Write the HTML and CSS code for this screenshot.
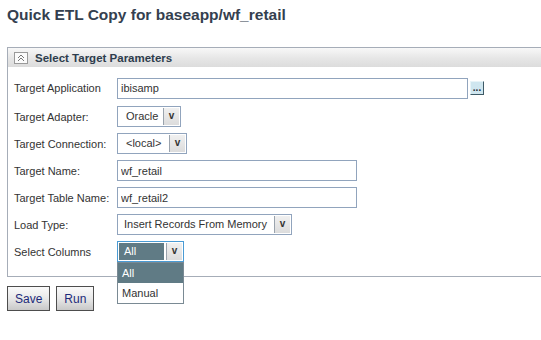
FILE: index.html
```html
<!DOCTYPE html>
<html lang="en">
<head>
  <meta charset="UTF-8">
  <title>Quick ETL Copy</title>
  <link rel="stylesheet" href="styles.css">
</head>
<body>
  <h1>Quick ETL Copy for baseapp/wf_retail</h1>

  <div class="panel">
    <div class="panel-head">
      <span class="collapse">
        <svg width="12" height="10" viewBox="0 0 12 10"><path d="M3 5 L6 2 L9 5 M3 8 L6 5 L9 8" fill="none" stroke="#777" stroke-width="1"/></svg>
      </span>
      <span class="panel-title">Select Target Parameters</span>
    </div>

    <div class="form">
      <label class="row-app">Target Application</label>
      <div class="row-app field">
        <input class="text wide" type="text" value="ibisamp">
        <span class="browse">...</span>
      </div>

      <label>Target Adapter:</label>
      <div class="field">
        <span class="select w-oracle"><span class="val">Oracle</span><span class="arrow">v</span></span>
      </div>

      <label>Target Connection:</label>
      <div class="field">
        <span class="select w-local"><span class="val">&lt;local&gt;</span><span class="arrow">v</span></span>
      </div>

      <label>Target Name:</label>
      <div class="field"><input class="text mid" type="text" value="wf_retail"></div>

      <label>Target Table Name:</label>
      <div class="field"><input class="text mid" type="text" value="wf_retail2"></div>

      <label>Load Type:</label>
      <div class="field">
        <span class="select w-load"><span class="val">Insert Records From Memory</span><span class="arrow">v</span></span>
      </div>

      <label>Select Columns</label>
      <div class="field">
        <span class="select w-cols open">
          <span class="val">All</span><span class="arrow">v</span>
          <ul class="options">
            <li class="on">All</li>
            <li>Manual</li>
          </ul>
        </span>
      </div>
    </div>
  </div>

  <div class="actions">
    <button>Save</button>
    <button>Run</button>
  </div>
</body>
</html>
```

FILE: styles.css
```css
html {
  overflow: hidden;
}
body {
  margin: 0;
  padding: 0 0 0 7px;
  font-family: "Liberation Sans", Arial, sans-serif;
  font-size: 11px;
  color: #333;
  background: #fff;
}
h1 {
  margin: 0;
  padding-top: 6px;
  height: 47px;
  box-sizing: border-box;
  font-size: 15.5px;
  font-weight: bold;
  color: #34404f;
}
.panel {
  width: 560px;
  border: 1px solid #a6adb8;
  border-right: none;
  height: 230px;
  box-sizing: border-box;
}
.panel-head {
  height: 19px;
  display: flex;
  align-items: center;
  background: linear-gradient(#f8f8f8, #e6e6e6 55%, #dcdcdc);
}
.collapse {
  width: 12px;
  height: 10px;
  margin-left: 6px;
  border: 1px solid #9a9a9a;
  background: #fbfbfb;
  display: flex;
}
.panel-title {
  margin-left: 7px;
  font-weight: bold;
  font-size: 11.5px;
  color: #2e3d4d;
}
.form {
  display: grid;
  grid-template-columns: 103px auto;
  grid-auto-rows: 21px;
  row-gap: 6px;
  padding: 12px 0 0 6px;
  align-items: center;
}
.form label.row-app,
.form .row-app {
  margin-bottom: 3px;
}
.field {
  display: flex;
  align-items: center;
  height: 21px;
}
.text {
  height: 21px;
  box-sizing: border-box;
  border: 1px solid #91a4bd;
  padding: 0 3px;
  font: inherit;
  color: #333;
  margin: 0;
}
.wide {
  width: 351px;
}
.mid {
  width: 240px;
}
.browse {
  width: 12px;
  height: 12px;
  margin-left: 2px;
  background: #cfe6ef;
  border-right: 1px solid #3e5a66;
  border-bottom: 1px solid #3e5a66;
  border-top: 1px solid #e8f4f8;
  border-left: 1px solid #e8f4f8;
  font-size: 10px;
  font-weight: bold;
  line-height: 12px;
  text-align: center;
  color: #1f2d36;
  overflow: hidden;
}
.select {
  position: relative;
  display: flex;
  height: 21px;
  box-sizing: border-box;
  border: 1px solid #91a4bd;
  background: #fff;
}
.select .val {
  flex: 1;
  padding-left: 8px;
  line-height: 19px;
  white-space: nowrap;
}
.select .arrow {
  width: 15px;
  margin: 1px 1px 1px 0;
  border-left: 1px solid #9aa3ad;
  background: linear-gradient(#f0f0f0, #dcdcdc);
  text-align: center;
  font-weight: bold;
  font-size: 10px;
  line-height: 16px;
  color: #333;
}
.w-oracle { width: 64px; }
.w-local { width: 70px; }
.w-load { width: 175px; }
.w-load .val { padding-left: 6px; }
.w-cols { width: 67px; border-color: #4a9bd4; }
.w-cols .val {
  background: #607b85;
  color: #fff;
  margin: 1px;
  padding-left: 5px;
  line-height: 17px;
  border-right: 1px solid #fff;
}
.options {
  position: absolute;
  left: -1px;
  top: 20px;
  width: 67px;
  margin: 0;
  padding: 0;
  list-style: none;
  border: 1px solid #7a8a94;
  background: #fff;
  box-sizing: border-box;
}
.options li {
  height: 20px;
  line-height: 20px;
  padding-left: 4px;
}
.options li.on {
  background: #607b85;
  color: #fff;
}
.actions {
  display: flex;
  gap: 6px;
  margin-top: 9px;
}
button {
  height: 25px;
  padding: 0 7px;
  font-family: "Liberation Sans", Arial, sans-serif;
  font-size: 12px;
  color: #1d2a7a;
  border: 1px solid #4d4d4d;
  background: linear-gradient(#fafafa, #e8e8e8 50%, #c8c8c8);
}
```
